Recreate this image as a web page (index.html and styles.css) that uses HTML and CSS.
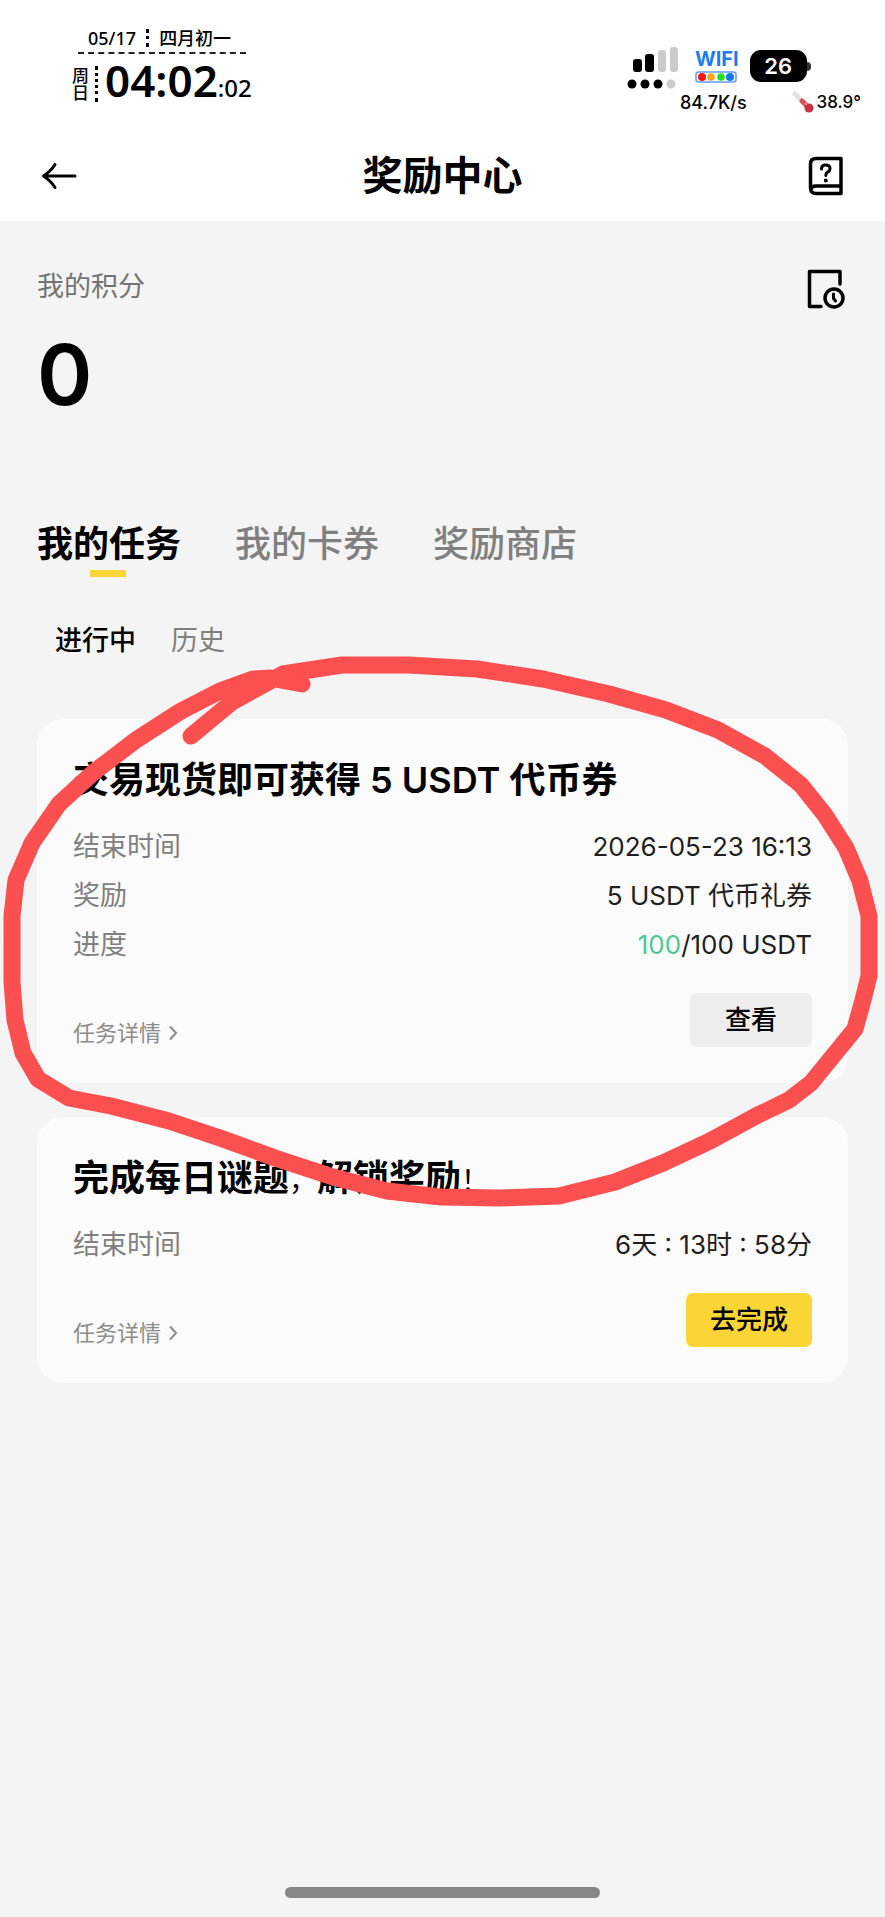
FILE: index.html
```html
<!DOCTYPE html>
<html lang="zh-CN">
<head>
<meta charset="utf-8">
<meta name="viewport" content="width=device-width, initial-scale=1">
<title>奖励中心</title>
<link rel="stylesheet" href="styles.css">
</head>
<body>
<div class="app">
  <div class="status">
    <div class="clock">
      <div class="clock-date"><span>05/17</span><i class="dots dots-short"></i><span>四月初一</span></div>
      <div class="clock-row">
        <div class="weekday">周日</div>
        <i class="dots"></i>
        <div class="time">04:02<span class="seconds">:02</span></div>
      </div>
    </div>
    <div class="indicators">
      <div class="indicator-row">
        <svg class="signal" width="52" height="44" viewBox="0 0 52 44" aria-hidden="true">
          <rect x="6" y="13" width="9" height="13" rx="3"/>
          <rect x="18" y="8" width="9" height="18" rx="3"/>
          <rect x="31" y="4" width="8" height="22" rx="3" fill="#ccc"/>
          <rect x="43" y="1" width="8" height="25" rx="3" fill="#ccc"/>
          <circle cx="5" cy="38" r="4.5"/><circle cx="18" cy="38" r="4.5"/><circle cx="31" cy="38" r="4.5"/><circle cx="44" cy="38" r="4.5" fill="#ccc"/>
        </svg>
        <div class="wifi">
          <span>WIFI</span>
          <svg width="42" height="12" viewBox="0 0 42 12" aria-hidden="true">
            <rect x="1" y="1" width="40" height="10" rx="2.5" fill="#fff" stroke="#5f9df5" stroke-width="1.5"/>
            <circle cx="7" cy="6" r="4" fill="#fb1515"/><circle cx="16" cy="6" r="3.8" fill="#ffa51c"/><circle cx="26" cy="6" r="3.8" fill="#22e322"/><circle cx="35" cy="6" r="4" fill="#1877f2"/>
          </svg>
        </div>
        <div class="battery"><span class="battery-body">26</span><i class="battery-tip"></i></div>
      </div>
      <div class="metrics">
        <span class="speed">84.7K/s</span>
        <span class="temp">
          <svg width="22" height="22" viewBox="0 0 22 22" aria-hidden="true">
            <path d="M3 3 14 14" stroke="#dfe4ea" stroke-width="5" stroke-linecap="round"/>
            <path d="M10 10 16 16" stroke="#d9505a" stroke-width="5" stroke-linecap="round"/>
            <circle cx="17" cy="17" r="4.5" fill="#cf2f3c"/><circle cx="14" cy="13" r="1.2" fill="#f29aa0"/>
          </svg>38.9°</span>
      </div>
    </div>
  </div>

  <header class="header">
    <button class="icon-btn" aria-label="返回">
      <svg width="36" height="36" viewBox="0 0 36 36" fill="none" stroke="#000" stroke-width="3" stroke-linecap="round" stroke-linejoin="round"><path d="M34 18H3M14 6.500Q10 13 2.500 18Q10 23 14 29.500"/></svg>
    </button>
    <h1 class="title">奖励中心</h1>
    <button class="icon-btn" aria-label="帮助">
      <svg width="36" height="40" viewBox="0 0 36 40" fill="none" stroke="#000" stroke-width="3.500" stroke-linecap="round" stroke-linejoin="round"><path d="M33 2.500H8Q2.500 2.500 2.500 8V32Q2.500 37.500 8 37.500H33ZM33 30H8Q3 30 3 34"/><path d="M13.500 13Q13.500 9 17.500 9Q22 9 22 12.500Q22 15 19.500 16.200Q17.800 17 17.800 19.500" stroke-width="3"/><circle cx="17.800" cy="24.500" r="1" stroke-width="2"/></svg>
    </button>
  </header>

  <main class="main">
    <section class="points">
      <div class="points-top">
        <h2 class="points-label">我的积分</h2>
        <button class="icon-btn" aria-label="积分记录">
          <svg width="38" height="40" viewBox="0 0 38 40" fill="none" stroke="#000" stroke-width="3.500" stroke-linecap="round" stroke-linejoin="round"><path d="M33 15V2.500H2.500V37.500H14"/><circle cx="27" cy="29" r="9"/><path d="M26.500 25V29.500L28.500 32" stroke-width="3"/></svg>
        </button>
      </div>
      <div class="points-value">0</div>
    </section>

    <nav class="tabs">
      <button class="tab active">我的任务</button>
      <button class="tab">我的卡券</button>
      <button class="tab">奖励商店</button>
    </nav>
    <nav class="subtabs">
      <button class="subtab active">进行中</button>
      <button class="subtab">历史</button>
    </nav>

    <article class="card">
      <h3 class="card-title">交易现货即可获得 5 USDT 代币券</h3>
      <dl class="rows">
        <div class="row"><dt>结束时间</dt><dd>2026-05-23 16:13</dd></div>
        <div class="row"><dt>奖励</dt><dd>5 USDT 代币礼券</dd></div>
        <div class="row"><dt>进度</dt><dd><span class="done">100</span>/100 USDT</dd></div>
      </dl>
      <div class="card-foot">
        <a class="detail" href="#">任务详情<svg width="9" height="16" viewBox="0 0 9 16" fill="none" stroke="#8c8c8c" stroke-width="2" stroke-linecap="round"><path d="M1.500 2 7 8 1.500 14"/></svg></a>
        <button class="action">查看</button>
      </div>
    </article>

    <article class="card">
      <h3 class="card-title">完成每日谜题<span class="punct">，</span>解锁奖励<span class="punct">！</span></h3>
      <dl class="rows">
        <div class="row"><dt>结束时间</dt><dd>6天 : 13时 : 58分</dd></div>
      </dl>
      <div class="card-foot">
        <a class="detail" href="#">任务详情<svg width="9" height="16" viewBox="0 0 9 16" fill="none" stroke="#8c8c8c" stroke-width="2" stroke-linecap="round"><path d="M1.500 2 7 8 1.500 14"/></svg></a>
        <button class="action primary">去完成</button>
      </div>
    </article>
  </main>
  <div class="home-bar"></div>

  <svg class="marker" viewBox="0 0 885 1917" fill="none" stroke="#fc5050" stroke-width="17" stroke-linecap="round" stroke-linejoin="round" aria-hidden="true">
    <path d="M191 736 232 702 283 674 342 665 409 665 477 669 543 679 609 694 666 710 718 730 765 756 801 785 825 815 846 848 860 881 869 916 869 976 863 1000 855 1029 811 1083 789 1100 756 1116 710 1141 663 1163 615 1182 559 1196 499 1198 441 1197 387 1191 333 1177 275 1158 223 1139 169 1121 111 1106 69 1098 38 1079 23 1053 15 1020 12 982 12 916 16 880 32 843 59 804 94 772 136 740 181 711 220 691 253 679 270 678 302 684"/>
  </svg>
</div>
</body>
</html>
```
FILE: styles.css
```css
* { box-sizing: border-box; }
body {
  margin: 0;
  background: #f4f4f4;
  color: #000;
  font-family: Inter, "Noto Sans CJK SC", sans-serif;
}
h1, h2, h3, dl, dd { margin: 0; }
button {
  margin: 0;
  padding: 0;
  border: 0;
  background: none;
  color: inherit;
  font: inherit;
}
svg { display: block; }

.app {
  position: relative;
  display: flex;
  flex-direction: column;
  min-height: 100vh;
}

/* Status bar */
.status {
  display: flex;
  justify-content: space-between;
  height: 130px;
  padding: 24px 24px 0 70px;
  background: #fff;
}
.clock { font-family: "Noto Sans", "Noto Sans CJK SC", sans-serif; font-weight: 500; }
.clock-date {
  display: flex;
  align-items: center;
  gap: 10px;
  width: 168px;
  height: 30px;
  margin-left: 8px;
  padding-left: 10px;
  border-bottom: 2px dashed #222;
  font-size: 18px;
  line-height: 28px;
  white-space: nowrap;
}
.dots { height: 36px; border-left: 3px dotted #000; }
.dots-short { height: 18px; }
.clock-row { display: flex; align-items: center; gap: 7px; height: 60px; }
.weekday {
  writing-mode: vertical-rl;
  font-size: 17px;
  line-height: 18px;
}
.time { font-size: 44px; line-height: 56px; font-weight: 600; white-space: nowrap; }
.seconds { font-size: 24px; font-weight: 500; }
.indicators { width: 234px; padding-top: 22px; }
.indicator-row { display: flex; height: 44px; }
.wifi { margin-left: 16px; }
.wifi span {
  display: block;
  height: 25px;
  color: #1f7cf0;
  font-size: 20px;
  line-height: 26px;
  font-weight: 700;
}
.battery { display: flex; align-items: center; height: 32px; margin: 4px 0 0 11px; }
.battery-body {
  width: 57px;
  border-radius: 11px;
  background: #000;
  color: #fff;
  font-size: 22px;
  line-height: 32px;
  font-weight: 600;
  text-align: center;
}
.battery-tip { width: 4px; height: 9px; border-radius: 0 4px 4px 0; background: #333; }
.metrics {
  display: flex;
  justify-content: space-between;
  align-items: center;
  height: 24px;
  padding-left: 53px;
  font-size: 18px;
  font-weight: 500;
}
.temp { display: flex; align-items: center; gap: 3px; font-size: 17px; }

/* Header */
.header {
  display: flex;
  justify-content: space-between;
  align-items: center;
  height: 91px;
  padding: 0 41px;
  background: #fff;
}
.title { font-size: 40px; line-height: 56px; font-weight: 700; }

.main { flex: 1; padding: 46px 37px 0; }
.points { height: 252px; }
.points-top { display: flex; justify-content: space-between; height: 44px; padding-right: 3px; }
.points-label { color: #737373; font-size: 27px; line-height: 40px; font-weight: 400; }
.points-value { margin-top: 16px; font-size: 84px; line-height: 96px; font-weight: 600; }

/* Tabs */
.tabs { display: flex; gap: 54px; height: 92px; }
.tab {
  position: relative;
  height: 50px;
  color: #808080;
  font-size: 36px;
  line-height: 50px;
  font-weight: 500;
}
.tab.active { color: #000; font-weight: 700; }
.tab.active::after {
  content: "";
  position: absolute;
  left: 53px;
  bottom: -8px;
  width: 36px;
  height: 7px;
  background: #fbd535;
}
.subtabs { display: flex; gap: 35px; height: 108px; padding: 12px 18px 0; }
.subtab { height: 36px; color: #808080; font-size: 27px; line-height: 36px; }
.subtab.active { color: #000; font-weight: 500; }

/* Task cards */
.card {
  margin-bottom: 34px;
  padding: 35px 36px 36px;
  border-radius: 26px;
  background: #fbfbfb;
}
.card-title { font-size: 36px; line-height: 52px; font-weight: 600; }
.punct { font-size: 28px; line-height: 28px; font-weight: 400; }
.rows { padding-top: 16px; }
.row {
  display: flex;
  justify-content: space-between;
  font-size: 26px;
  line-height: 49px;
}
.row dt { color: #808080; font-size: 27px; }
.row dd { color: #1e1e1e; }
.row .done { color: #4fc795; }
.card-foot { display: flex; justify-content: space-between; align-items: flex-end; padding-top: 24px; }
.detail {
  display: flex;
  align-items: center;
  gap: 8px;
  color: #8c8c8c;
  font-size: 22px;
  line-height: 28px;
  text-decoration: none;
}
.action {
  height: 54px;
  padding: 0 35px;
  border-radius: 7px;
  background: #ededed;
  font-size: 26px;
  line-height: 54px;
  font-weight: 500;
}
.action.primary { padding: 0 24px; background: #fbd535; }

.home-bar {
  width: 315px;
  height: 11px;
  margin: 0 auto 19px;
  border-radius: 6px;
  background: #878787;
}

/* Freehand stroke over the page */
.marker { position: absolute; top: 0; left: 0; width: 100%; pointer-events: none; }
```
